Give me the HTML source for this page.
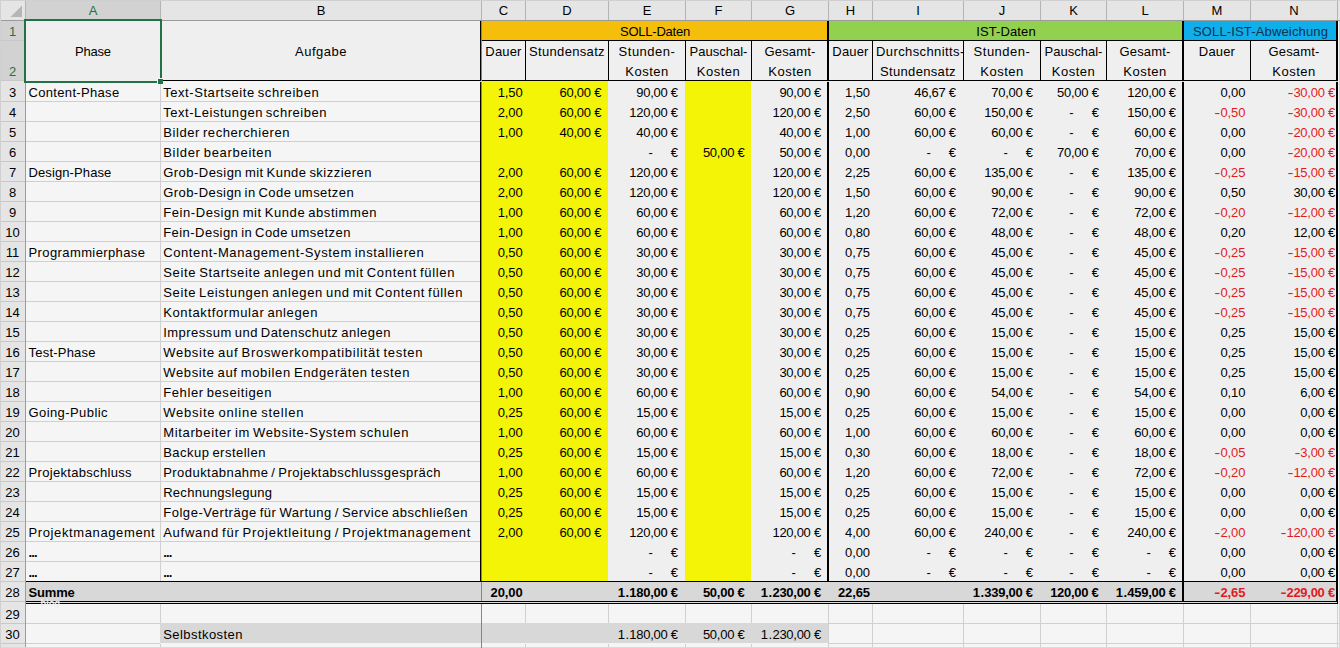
<!DOCTYPE html><html lang="de"><head><meta charset="utf-8"><title>Projektkalkulation</title><style>
html,body{margin:0;padding:0}body{width:1340px;height:648px;overflow:hidden;background:#f5f5f5;position:relative;font-family:"Liberation Sans", Arial, sans-serif;font-size:13px;color:#000;line-height:20px}
div{position:absolute;white-space:pre;box-sizing:border-box;word-spacing:-1.2px}
.t{height:20px}.r{text-align:right;letter-spacing:-0.27px;word-spacing:0}.p{letter-spacing:-0.1px}.m{display:inline-block;transform:scaleX(1.4);transform-origin:100% 50%}.c{text-align:center}.b{font-weight:bold}.red{color:#e01b1e}
.ch{top:1px;height:19px;line-height:19px;text-align:center;font-size:13px}
.rh{left:0;width:25px;text-align:center;font-size:13px}
</style></head><body>
<div style="left:0px;top:0px;width:1340px;height:21px;background:#e5e5e5;"></div>
<div style="left:0px;top:0px;width:1340px;height:1px;background:#cfcfcf;"></div>
<div style="left:0px;top:20px;width:1340px;height:1px;background:#9b9b9b;"></div>
<div style="left:0px;top:21px;width:26px;height:627px;background:#e5e5e5;"></div>
<div style="left:25px;top:21px;width:1px;height:627px;background:#9b9b9b;"></div>
<div style="left:26px;top:1px;width:135px;height:19px;background:#d2d2d2;"></div>
<div style="left:0px;top:21px;width:25px;height:60px;background:#d2d2d2;"></div>
<div style="left:26px;top:21px;width:1311px;height:60px;background:#efefef;"></div>
<div style="left:481px;top:81px;width:856px;height:500px;background:#efefef;"></div>
<div style="left:482px;top:81px;width:126px;height:500px;background:#f4f406;"></div>
<div style="left:685px;top:81px;width:66px;height:500px;background:#f4f406;"></div>
<div style="left:482px;top:21px;width:346px;height:19px;background:#f5be0b;"></div>
<div style="left:829px;top:21px;width:354px;height:19px;background:#92d050;"></div>
<div style="left:1184px;top:21px;width:153px;height:19px;background:#10aeea;"></div>
<div style="left:26px;top:582px;width:1311px;height:19px;background:#d8d8d8;"></div>
<div style="left:161px;top:624px;width:667px;height:19px;background:#d8d8d8;"></div>
<div style="left:26px;top:101px;width:455px;height:1px;background:#d0d0d0;"></div>
<div style="left:26px;top:121px;width:455px;height:1px;background:#d0d0d0;"></div>
<div style="left:26px;top:141px;width:455px;height:1px;background:#d0d0d0;"></div>
<div style="left:26px;top:161px;width:455px;height:1px;background:#d0d0d0;"></div>
<div style="left:26px;top:181px;width:455px;height:1px;background:#d0d0d0;"></div>
<div style="left:26px;top:201px;width:455px;height:1px;background:#d0d0d0;"></div>
<div style="left:26px;top:221px;width:455px;height:1px;background:#d0d0d0;"></div>
<div style="left:26px;top:241px;width:455px;height:1px;background:#d0d0d0;"></div>
<div style="left:26px;top:261px;width:455px;height:1px;background:#d0d0d0;"></div>
<div style="left:26px;top:281px;width:455px;height:1px;background:#d0d0d0;"></div>
<div style="left:26px;top:301px;width:455px;height:1px;background:#d0d0d0;"></div>
<div style="left:26px;top:321px;width:455px;height:1px;background:#d0d0d0;"></div>
<div style="left:26px;top:341px;width:455px;height:1px;background:#d0d0d0;"></div>
<div style="left:26px;top:361px;width:455px;height:1px;background:#d0d0d0;"></div>
<div style="left:26px;top:381px;width:455px;height:1px;background:#d0d0d0;"></div>
<div style="left:26px;top:401px;width:455px;height:1px;background:#d0d0d0;"></div>
<div style="left:26px;top:421px;width:455px;height:1px;background:#d0d0d0;"></div>
<div style="left:26px;top:441px;width:455px;height:1px;background:#d0d0d0;"></div>
<div style="left:26px;top:461px;width:455px;height:1px;background:#d0d0d0;"></div>
<div style="left:26px;top:481px;width:455px;height:1px;background:#d0d0d0;"></div>
<div style="left:26px;top:501px;width:455px;height:1px;background:#d0d0d0;"></div>
<div style="left:26px;top:521px;width:455px;height:1px;background:#d0d0d0;"></div>
<div style="left:26px;top:541px;width:455px;height:1px;background:#d0d0d0;"></div>
<div style="left:26px;top:561px;width:455px;height:1px;background:#d0d0d0;"></div>
<div style="left:26px;top:623px;width:1314px;height:1px;background:#d0d0d0;"></div>
<div style="left:26px;top:643px;width:1314px;height:1px;background:#d0d0d0;"></div>
<div style="left:160px;top:81px;width:1px;height:500px;background:#d0d0d0;"></div>
<div style="left:160px;top:604px;width:1px;height:44px;background:#d0d0d0;"></div>
<div style="left:481px;top:604px;width:1px;height:44px;background:#d0d0d0;"></div>
<div style="left:525px;top:604px;width:1px;height:44px;background:#d0d0d0;"></div>
<div style="left:608px;top:604px;width:1px;height:44px;background:#d0d0d0;"></div>
<div style="left:685px;top:604px;width:1px;height:44px;background:#d0d0d0;"></div>
<div style="left:751px;top:604px;width:1px;height:44px;background:#d0d0d0;"></div>
<div style="left:828px;top:604px;width:1px;height:44px;background:#d0d0d0;"></div>
<div style="left:872px;top:604px;width:1px;height:44px;background:#d0d0d0;"></div>
<div style="left:963px;top:604px;width:1px;height:44px;background:#d0d0d0;"></div>
<div style="left:1040px;top:604px;width:1px;height:44px;background:#d0d0d0;"></div>
<div style="left:1106px;top:604px;width:1px;height:44px;background:#d0d0d0;"></div>
<div style="left:1183px;top:604px;width:1px;height:44px;background:#d0d0d0;"></div>
<div style="left:1250px;top:604px;width:1px;height:44px;background:#d0d0d0;"></div>
<div style="left:1337px;top:604px;width:1px;height:44px;background:#d0d0d0;"></div>
<div style="left:160px;top:623px;width:668px;height:20px;background:#d8d8d8;"></div>
<div style="left:160px;top:643px;width:668px;height:1px;background:#f5f5f5;"></div>
<div style="left:0px;top:647px;width:1340px;height:1px;background:#dadada;"></div>
<div style="left:1339px;top:21px;width:1px;height:627px;background:#d6d6d6;"></div>
<div style="left:1px;top:40px;width:24px;height:1px;background:#c8c8c8;"></div>
<div style="left:1px;top:80px;width:24px;height:1px;background:#c8c8c8;"></div>
<div style="left:1px;top:101px;width:24px;height:1px;background:#c8c8c8;"></div>
<div style="left:1px;top:121px;width:24px;height:1px;background:#c8c8c8;"></div>
<div style="left:1px;top:141px;width:24px;height:1px;background:#c8c8c8;"></div>
<div style="left:1px;top:161px;width:24px;height:1px;background:#c8c8c8;"></div>
<div style="left:1px;top:181px;width:24px;height:1px;background:#c8c8c8;"></div>
<div style="left:1px;top:201px;width:24px;height:1px;background:#c8c8c8;"></div>
<div style="left:1px;top:221px;width:24px;height:1px;background:#c8c8c8;"></div>
<div style="left:1px;top:241px;width:24px;height:1px;background:#c8c8c8;"></div>
<div style="left:1px;top:261px;width:24px;height:1px;background:#c8c8c8;"></div>
<div style="left:1px;top:281px;width:24px;height:1px;background:#c8c8c8;"></div>
<div style="left:1px;top:301px;width:24px;height:1px;background:#c8c8c8;"></div>
<div style="left:1px;top:321px;width:24px;height:1px;background:#c8c8c8;"></div>
<div style="left:1px;top:341px;width:24px;height:1px;background:#c8c8c8;"></div>
<div style="left:1px;top:361px;width:24px;height:1px;background:#c8c8c8;"></div>
<div style="left:1px;top:381px;width:24px;height:1px;background:#c8c8c8;"></div>
<div style="left:1px;top:401px;width:24px;height:1px;background:#c8c8c8;"></div>
<div style="left:1px;top:421px;width:24px;height:1px;background:#c8c8c8;"></div>
<div style="left:1px;top:441px;width:24px;height:1px;background:#c8c8c8;"></div>
<div style="left:1px;top:461px;width:24px;height:1px;background:#c8c8c8;"></div>
<div style="left:1px;top:481px;width:24px;height:1px;background:#c8c8c8;"></div>
<div style="left:1px;top:501px;width:24px;height:1px;background:#c8c8c8;"></div>
<div style="left:1px;top:521px;width:24px;height:1px;background:#c8c8c8;"></div>
<div style="left:1px;top:541px;width:24px;height:1px;background:#c8c8c8;"></div>
<div style="left:1px;top:561px;width:24px;height:1px;background:#c8c8c8;"></div>
<div style="left:1px;top:581px;width:24px;height:1px;background:#c8c8c8;"></div>
<div style="left:1px;top:601px;width:24px;height:1px;background:#c8c8c8;"></div>
<div style="left:1px;top:623px;width:24px;height:1px;background:#c8c8c8;"></div>
<div style="left:1px;top:643px;width:24px;height:1px;background:#c8c8c8;"></div>
<div style="left:0px;top:0px;width:1px;height:648px;background:#d0d0d0;"></div>
<div style="left:25px;top:1px;width:1px;height:19px;background:#b4b4b4;"></div>
<div style="left:160px;top:1px;width:1px;height:19px;background:#b4b4b4;"></div>
<div style="left:481px;top:1px;width:1px;height:19px;background:#b4b4b4;"></div>
<div style="left:525px;top:1px;width:1px;height:19px;background:#b4b4b4;"></div>
<div style="left:608px;top:1px;width:1px;height:19px;background:#b4b4b4;"></div>
<div style="left:685px;top:1px;width:1px;height:19px;background:#b4b4b4;"></div>
<div style="left:751px;top:1px;width:1px;height:19px;background:#b4b4b4;"></div>
<div style="left:828px;top:1px;width:1px;height:19px;background:#b4b4b4;"></div>
<div style="left:872px;top:1px;width:1px;height:19px;background:#b4b4b4;"></div>
<div style="left:963px;top:1px;width:1px;height:19px;background:#b4b4b4;"></div>
<div style="left:1040px;top:1px;width:1px;height:19px;background:#b4b4b4;"></div>
<div style="left:1106px;top:1px;width:1px;height:19px;background:#b4b4b4;"></div>
<div style="left:1183px;top:1px;width:1px;height:19px;background:#b4b4b4;"></div>
<div style="left:1250px;top:1px;width:1px;height:19px;background:#b4b4b4;"></div>
<div style="left:1337px;top:1px;width:1px;height:19px;background:#b4b4b4;"></div>
<div style="left:162px;top:80px;width:1175px;height:1px;background:#000;"></div>
<div style="left:482px;top:40px;width:855px;height:1px;background:#000;"></div>
<div style="left:525px;top:41px;width:1px;height:40px;background:#000;"></div>
<div style="left:608px;top:41px;width:1px;height:40px;background:#000;"></div>
<div style="left:685px;top:41px;width:1px;height:40px;background:#000;"></div>
<div style="left:751px;top:41px;width:1px;height:40px;background:#000;"></div>
<div style="left:872px;top:41px;width:1px;height:40px;background:#000;"></div>
<div style="left:963px;top:41px;width:1px;height:40px;background:#000;"></div>
<div style="left:1040px;top:41px;width:1px;height:40px;background:#000;"></div>
<div style="left:1106px;top:41px;width:1px;height:40px;background:#000;"></div>
<div style="left:1250px;top:41px;width:1px;height:40px;background:#000;"></div>
<div style="left:480px;top:21px;width:1px;height:561px;background:#000;"></div>
<div style="left:481px;top:21px;width:1px;height:627px;background:#858585;"></div>
<div style="left:827px;top:21px;width:2px;height:561px;background:#000;"></div>
<div style="left:1182px;top:21px;width:2px;height:583px;background:#000;"></div>
<div style="left:1336px;top:21px;width:2px;height:583px;background:#000;"></div>
<div style="left:26px;top:581px;width:1311px;height:1px;background:#000;"></div>
<div style="left:26px;top:601px;width:1311px;height:1px;background:#000;"></div>
<div style="left:26px;top:603px;width:1311px;height:1px;background:#000;"></div>
<div style="left:26px;top:602px;width:1311px;height:1px;background:#dedede;"></div>
<div style="left:480px;top:81px;width:2px;height:1px;background:#d6d6d6;"></div>
<div style="left:827px;top:81px;width:2px;height:1px;background:#d6d6d6;"></div>
<div style="left:1182px;top:81px;width:2px;height:1px;background:#d6d6d6;"></div>
<div style="left:1336px;top:81px;width:2px;height:1px;background:#d6d6d6;"></div>
<div style="left:24px;top:19px;width:138px;height:2px;background:#217346;"></div>
<div style="left:24px;top:81px;width:133px;height:2px;background:#217346;"></div>
<div style="left:24px;top:19px;width:2px;height:64px;background:#217346;"></div>
<div style="left:160px;top:19px;width:2px;height:59px;background:#217346;"></div>
<div style="left:158px;top:79px;width:5px;height:5px;background:#217346;"></div>
<div style="left:157px;top:78px;width:7px;height:1px;background:#f5f5f5;"></div>
<div style="left:157px;top:78px;width:1px;height:6px;background:#f5f5f5;"></div>
<svg style="position:absolute;left:0;top:0" width="25" height="20"><polygon points="22,5.5 22,17 10.5,17" fill="#b6b6b6"/></svg>
<div class="ch" style="left:26px;width:134px;color:#217346;">A</div>
<div class="ch" style="left:161px;width:320px;">B</div>
<div class="ch" style="left:482px;width:43px;">C</div>
<div class="ch" style="left:526px;width:82px;">D</div>
<div class="ch" style="left:609px;width:76px;">E</div>
<div class="ch" style="left:686px;width:65px;">F</div>
<div class="ch" style="left:752px;width:76px;">G</div>
<div class="ch" style="left:829px;width:43px;">H</div>
<div class="ch" style="left:873px;width:90px;">I</div>
<div class="ch" style="left:964px;width:76px;">J</div>
<div class="ch" style="left:1041px;width:65px;">K</div>
<div class="ch" style="left:1107px;width:76px;">L</div>
<div class="ch" style="left:1184px;width:66px;">M</div>
<div class="ch" style="left:1251px;width:86px;">N</div>
<div class="rh t" style="top:22px;color:#217346;">1</div>
<div class="rh t" style="top:62px;color:#217346;">2</div>
<div class="rh t" style="top:83px;">3</div>
<div class="rh t" style="top:103px;">4</div>
<div class="rh t" style="top:123px;">5</div>
<div class="rh t" style="top:143px;">6</div>
<div class="rh t" style="top:163px;">7</div>
<div class="rh t" style="top:183px;">8</div>
<div class="rh t" style="top:203px;">9</div>
<div class="rh t" style="top:223px;">10</div>
<div class="rh t" style="top:243px;">11</div>
<div class="rh t" style="top:263px;">12</div>
<div class="rh t" style="top:283px;">13</div>
<div class="rh t" style="top:303px;">14</div>
<div class="rh t" style="top:323px;">15</div>
<div class="rh t" style="top:343px;">16</div>
<div class="rh t" style="top:363px;">17</div>
<div class="rh t" style="top:383px;">18</div>
<div class="rh t" style="top:403px;">19</div>
<div class="rh t" style="top:423px;">20</div>
<div class="rh t" style="top:443px;">21</div>
<div class="rh t" style="top:463px;">22</div>
<div class="rh t" style="top:483px;">23</div>
<div class="rh t" style="top:503px;">24</div>
<div class="rh t" style="top:523px;">25</div>
<div class="rh t" style="top:543px;">26</div>
<div class="rh t" style="top:563px;">27</div>
<div class="rh t" style="top:583px;">28</div>
<div class="rh t" style="top:605px;">29</div>
<div class="rh t" style="top:625px;">30</div>
<div class="t c" style="left:26px;top:42px;width:134px;letter-spacing:-0.219px;">Phase</div>
<div class="t c" style="left:161px;top:42px;width:320px;letter-spacing:0.51px;">Aufgabe</div>
<div class="t c" style="left:482px;top:22px;width:346px;letter-spacing:-0.23px;">SOLL-Daten</div>
<div class="t c" style="left:829px;top:22px;width:354px;letter-spacing:0.121px;">IST-Daten</div>
<div class="t c" style="left:1184px;top:22px;width:153px;letter-spacing:0.154px;color:#0c3350;">SOLL-IST-Abweichung</div>
<div class="t c" style="left:482px;top:42px;width:43px;letter-spacing:0.17px;">Dauer</div>
<div class="t c" style="left:829px;top:42px;width:43px;letter-spacing:0.17px;">Dauer</div>
<div class="t c" style="left:1184px;top:42px;width:66px;letter-spacing:0.17px;">Dauer</div>
<div class="t c" style="left:526px;top:42px;width:82px;letter-spacing:0.322px;">Stundensatz</div>
<div class="t c" style="left:609px;top:42px;width:76px;letter-spacing:0.505px;">Stunden-</div>
<div class="t c" style="left:609px;top:62px;width:76px;letter-spacing:0.463px;">Kosten</div>
<div class="t c" style="left:964px;top:42px;width:76px;letter-spacing:0.505px;">Stunden-</div>
<div class="t c" style="left:964px;top:62px;width:76px;letter-spacing:0.463px;">Kosten</div>
<div class="t c" style="left:686px;top:42px;width:65px;letter-spacing:-0.002px;">Pauschal-</div>
<div class="t c" style="left:686px;top:62px;width:65px;letter-spacing:0.463px;">Kosten</div>
<div class="t c" style="left:1041px;top:42px;width:65px;letter-spacing:-0.002px;">Pauschal-</div>
<div class="t c" style="left:1041px;top:62px;width:65px;letter-spacing:0.463px;">Kosten</div>
<div class="t c" style="left:752px;top:42px;width:76px;letter-spacing:0.143px;">Gesamt-</div>
<div class="t c" style="left:752px;top:62px;width:76px;letter-spacing:0.463px;">Kosten</div>
<div class="t c" style="left:1107px;top:42px;width:76px;letter-spacing:0.143px;">Gesamt-</div>
<div class="t c" style="left:1107px;top:62px;width:76px;letter-spacing:0.463px;">Kosten</div>
<div class="t c" style="left:1251px;top:42px;width:86px;letter-spacing:0.143px;">Gesamt-</div>
<div class="t c" style="left:1251px;top:62px;width:86px;letter-spacing:0.463px;">Kosten</div>
<div class="t " style="left:873px;top:42px;width:95px;letter-spacing:0.402px;left:876px;">Durchschnitts-</div>
<div class="t c" style="left:873px;top:62px;width:90px;letter-spacing:0.322px;">Stundensatz</div>
<div class="t " style="left:28.5px;top:83px;width:140px;letter-spacing:0.33px;">Content-Phase</div>
<div class="t " style="left:28.5px;top:163px;width:140px;letter-spacing:0.104px;">Design-Phase</div>
<div class="t " style="left:28.5px;top:243px;width:140px;letter-spacing:0.397px;">Programmierphase</div>
<div class="t " style="left:28.5px;top:343px;width:140px;letter-spacing:0.217px;">Test-Phase</div>
<div class="t " style="left:28.5px;top:403px;width:140px;letter-spacing:0.415px;">Going-Public</div>
<div class="t " style="left:28.5px;top:463px;width:140px;letter-spacing:0.315px;">Projektabschluss</div>
<div class="t " style="left:28.5px;top:523px;width:140px;letter-spacing:0.616px;">Projektmanagement</div>
<div class="t b" style="left:28.5px;top:543px;width:140px;letter-spacing:-0.822px;">...</div>
<div class="t b" style="left:28.5px;top:563px;width:140px;letter-spacing:-0.822px;">...</div>
<div class="t " style="left:163.2px;top:83px;width:320px;letter-spacing:0.568px;">Text-Startseite schreiben</div>
<div class="t " style="left:163.2px;top:103px;width:320px;letter-spacing:0.529px;">Text-Leistungen schreiben</div>
<div class="t " style="left:163.2px;top:123px;width:320px;letter-spacing:0.585px;">Bilder recherchieren</div>
<div class="t " style="left:163.2px;top:143px;width:320px;letter-spacing:0.697px;">Bilder bearbeiten</div>
<div class="t " style="left:163.2px;top:163px;width:320px;letter-spacing:0.471px;">Grob-Design mit Kunde skizzieren</div>
<div class="t " style="left:163.2px;top:183px;width:320px;letter-spacing:0.444px;">Grob-Design in Code umsetzen</div>
<div class="t " style="left:163.2px;top:203px;width:320px;letter-spacing:0.581px;">Fein-Design mit Kunde abstimmen</div>
<div class="t " style="left:163.2px;top:223px;width:320px;letter-spacing:0.458px;">Fein-Design in Code umsetzen</div>
<div class="t " style="left:163.2px;top:243px;width:320px;letter-spacing:0.609px;">Content-Management-System installieren</div>
<div class="t " style="left:163.2px;top:263px;width:320px;letter-spacing:0.659px;">Seite Startseite anlegen und mit Content füllen</div>
<div class="t " style="left:163.2px;top:283px;width:320px;letter-spacing:0.644px;">Seite Leistungen anlegen und mit Content füllen</div>
<div class="t " style="left:163.2px;top:303px;width:320px;letter-spacing:0.627px;">Kontaktformular anlegen</div>
<div class="t " style="left:163.2px;top:323px;width:320px;letter-spacing:0.484px;">Impressum und Datenschutz anlegen</div>
<div class="t " style="left:163.2px;top:343px;width:320px;letter-spacing:0.724px;">Website auf Broswerkompatibilität testen</div>
<div class="t " style="left:163.2px;top:363px;width:320px;letter-spacing:0.657px;">Website auf mobilen Endgeräten testen</div>
<div class="t " style="left:163.2px;top:383px;width:320px;letter-spacing:0.607px;">Fehler beseitigen</div>
<div class="t " style="left:163.2px;top:403px;width:320px;letter-spacing:0.782px;">Website online stellen</div>
<div class="t " style="left:163.2px;top:423px;width:320px;letter-spacing:0.658px;">Mitarbeiter im Website-System schulen</div>
<div class="t " style="left:163.2px;top:443px;width:320px;letter-spacing:0.489px;">Backup erstellen</div>
<div class="t " style="left:163.2px;top:463px;width:320px;letter-spacing:0.451px;">Produktabnahme / Projektabschlussgespräch</div>
<div class="t " style="left:163.2px;top:483px;width:320px;letter-spacing:0.281px;">Rechnungslegung</div>
<div class="t " style="left:163.2px;top:503px;width:320px;letter-spacing:0.539px;">Folge-Verträge für Wartung / Service abschließen</div>
<div class="t " style="left:163.2px;top:523px;width:320px;letter-spacing:0.736px;">Aufwand für Projektleitung / Projektmanagement</div>
<div class="t b" style="left:163.2px;top:543px;width:320px;letter-spacing:-0.822px;">...</div>
<div class="t b" style="left:163.2px;top:563px;width:320px;letter-spacing:-0.822px;">...</div>
<div class="t b" style="left:28.5px;top:583px;width:100px;letter-spacing:-0.167px;">Summe</div>
<div class="t " style="left:163.2px;top:625px;width:200px;letter-spacing:0.442px;">Selbstkosten</div>
<div style="left:40.5px;top:596.7px;font-size:9px;line-height:12px;font-weight:bold;letter-spacing:0.2px;color:#f0f0f0">blog</div>
<div class="t r p" style="left:402.6px;top:83px;width:120px">1,50</div>
<div class="t r" style="left:481.1px;top:83px;width:120px">60,00 €</div>
<div class="t r" style="left:557.8px;top:83px;width:120px">90,00 €</div>
<div class="t r" style="left:700.9px;top:83px;width:120px">90,00 €</div>
<div class="t r p" style="left:750px;top:83px;width:120px">1,50</div>
<div class="t r" style="left:835.8px;top:83px;width:120px">46,67 €</div>
<div class="t r" style="left:912.8px;top:83px;width:120px">70,00 €</div>
<div class="t r" style="left:978.6px;top:83px;width:120px">50,00 €</div>
<div class="t r" style="left:1055.8px;top:83px;width:120px">120,00 €</div>
<div class="t r p" style="left:1125.3px;top:83px;width:120px">0,00</div>
<div class="t r red" style="left:1214.9px;top:83px;width:120px"><span class="m">-</span>30,00 €</div>
<div class="t r p" style="left:402.6px;top:103px;width:120px">2,00</div>
<div class="t r" style="left:481.1px;top:103px;width:120px">60,00 €</div>
<div class="t r" style="left:557.8px;top:103px;width:120px">120,00 €</div>
<div class="t r" style="left:700.9px;top:103px;width:120px">120,00 €</div>
<div class="t r p" style="left:750px;top:103px;width:120px">2,50</div>
<div class="t r" style="left:835.8px;top:103px;width:120px">60,00 €</div>
<div class="t r" style="left:912.8px;top:103px;width:120px">150,00 €</div>
<div class="t r" style="left:978.6px;top:103px;width:120px"><span style="margin-right:18.3px">-</span>€</div>
<div class="t r" style="left:1055.8px;top:103px;width:120px">150,00 €</div>
<div class="t r red p" style="left:1125.3px;top:103px;width:120px"><span class="m">-</span>0,50</div>
<div class="t r red" style="left:1214.9px;top:103px;width:120px"><span class="m">-</span>30,00 €</div>
<div class="t r p" style="left:402.6px;top:123px;width:120px">1,00</div>
<div class="t r" style="left:481.1px;top:123px;width:120px">40,00 €</div>
<div class="t r" style="left:557.8px;top:123px;width:120px">40,00 €</div>
<div class="t r" style="left:700.9px;top:123px;width:120px">40,00 €</div>
<div class="t r p" style="left:750px;top:123px;width:120px">1,00</div>
<div class="t r" style="left:835.8px;top:123px;width:120px">60,00 €</div>
<div class="t r" style="left:912.8px;top:123px;width:120px">60,00 €</div>
<div class="t r" style="left:978.6px;top:123px;width:120px"><span style="margin-right:18.3px">-</span>€</div>
<div class="t r" style="left:1055.8px;top:123px;width:120px">60,00 €</div>
<div class="t r p" style="left:1125.3px;top:123px;width:120px">0,00</div>
<div class="t r red" style="left:1214.9px;top:123px;width:120px"><span class="m">-</span>20,00 €</div>
<div class="t r" style="left:557.8px;top:143px;width:120px"><span style="margin-right:18.3px">-</span>€</div>
<div class="t r" style="left:624.4px;top:143px;width:120px">50,00 €</div>
<div class="t r" style="left:700.9px;top:143px;width:120px">50,00 €</div>
<div class="t r p" style="left:750px;top:143px;width:120px">0,00</div>
<div class="t r" style="left:835.8px;top:143px;width:120px"><span style="margin-right:18.3px">-</span>€</div>
<div class="t r" style="left:912.8px;top:143px;width:120px"><span style="margin-right:18.3px">-</span>€</div>
<div class="t r" style="left:978.6px;top:143px;width:120px">70,00 €</div>
<div class="t r" style="left:1055.8px;top:143px;width:120px">70,00 €</div>
<div class="t r p" style="left:1125.3px;top:143px;width:120px">0,00</div>
<div class="t r red" style="left:1214.9px;top:143px;width:120px"><span class="m">-</span>20,00 €</div>
<div class="t r p" style="left:402.6px;top:163px;width:120px">2,00</div>
<div class="t r" style="left:481.1px;top:163px;width:120px">60,00 €</div>
<div class="t r" style="left:557.8px;top:163px;width:120px">120,00 €</div>
<div class="t r" style="left:700.9px;top:163px;width:120px">120,00 €</div>
<div class="t r p" style="left:750px;top:163px;width:120px">2,25</div>
<div class="t r" style="left:835.8px;top:163px;width:120px">60,00 €</div>
<div class="t r" style="left:912.8px;top:163px;width:120px">135,00 €</div>
<div class="t r" style="left:978.6px;top:163px;width:120px"><span style="margin-right:18.3px">-</span>€</div>
<div class="t r" style="left:1055.8px;top:163px;width:120px">135,00 €</div>
<div class="t r red p" style="left:1125.3px;top:163px;width:120px"><span class="m">-</span>0,25</div>
<div class="t r red" style="left:1214.9px;top:163px;width:120px"><span class="m">-</span>15,00 €</div>
<div class="t r p" style="left:402.6px;top:183px;width:120px">2,00</div>
<div class="t r" style="left:481.1px;top:183px;width:120px">60,00 €</div>
<div class="t r" style="left:557.8px;top:183px;width:120px">120,00 €</div>
<div class="t r" style="left:700.9px;top:183px;width:120px">120,00 €</div>
<div class="t r p" style="left:750px;top:183px;width:120px">1,50</div>
<div class="t r" style="left:835.8px;top:183px;width:120px">60,00 €</div>
<div class="t r" style="left:912.8px;top:183px;width:120px">90,00 €</div>
<div class="t r" style="left:978.6px;top:183px;width:120px"><span style="margin-right:18.3px">-</span>€</div>
<div class="t r" style="left:1055.8px;top:183px;width:120px">90,00 €</div>
<div class="t r p" style="left:1125.3px;top:183px;width:120px">0,50</div>
<div class="t r" style="left:1214.9px;top:183px;width:120px">30,00 €</div>
<div class="t r p" style="left:402.6px;top:203px;width:120px">1,00</div>
<div class="t r" style="left:481.1px;top:203px;width:120px">60,00 €</div>
<div class="t r" style="left:557.8px;top:203px;width:120px">60,00 €</div>
<div class="t r" style="left:700.9px;top:203px;width:120px">60,00 €</div>
<div class="t r p" style="left:750px;top:203px;width:120px">1,20</div>
<div class="t r" style="left:835.8px;top:203px;width:120px">60,00 €</div>
<div class="t r" style="left:912.8px;top:203px;width:120px">72,00 €</div>
<div class="t r" style="left:978.6px;top:203px;width:120px"><span style="margin-right:18.3px">-</span>€</div>
<div class="t r" style="left:1055.8px;top:203px;width:120px">72,00 €</div>
<div class="t r red p" style="left:1125.3px;top:203px;width:120px"><span class="m">-</span>0,20</div>
<div class="t r red" style="left:1214.9px;top:203px;width:120px"><span class="m">-</span>12,00 €</div>
<div class="t r p" style="left:402.6px;top:223px;width:120px">1,00</div>
<div class="t r" style="left:481.1px;top:223px;width:120px">60,00 €</div>
<div class="t r" style="left:557.8px;top:223px;width:120px">60,00 €</div>
<div class="t r" style="left:700.9px;top:223px;width:120px">60,00 €</div>
<div class="t r p" style="left:750px;top:223px;width:120px">0,80</div>
<div class="t r" style="left:835.8px;top:223px;width:120px">60,00 €</div>
<div class="t r" style="left:912.8px;top:223px;width:120px">48,00 €</div>
<div class="t r" style="left:978.6px;top:223px;width:120px"><span style="margin-right:18.3px">-</span>€</div>
<div class="t r" style="left:1055.8px;top:223px;width:120px">48,00 €</div>
<div class="t r p" style="left:1125.3px;top:223px;width:120px">0,20</div>
<div class="t r" style="left:1214.9px;top:223px;width:120px">12,00 €</div>
<div class="t r p" style="left:402.6px;top:243px;width:120px">0,50</div>
<div class="t r" style="left:481.1px;top:243px;width:120px">60,00 €</div>
<div class="t r" style="left:557.8px;top:243px;width:120px">30,00 €</div>
<div class="t r" style="left:700.9px;top:243px;width:120px">30,00 €</div>
<div class="t r p" style="left:750px;top:243px;width:120px">0,75</div>
<div class="t r" style="left:835.8px;top:243px;width:120px">60,00 €</div>
<div class="t r" style="left:912.8px;top:243px;width:120px">45,00 €</div>
<div class="t r" style="left:978.6px;top:243px;width:120px"><span style="margin-right:18.3px">-</span>€</div>
<div class="t r" style="left:1055.8px;top:243px;width:120px">45,00 €</div>
<div class="t r red p" style="left:1125.3px;top:243px;width:120px"><span class="m">-</span>0,25</div>
<div class="t r red" style="left:1214.9px;top:243px;width:120px"><span class="m">-</span>15,00 €</div>
<div class="t r p" style="left:402.6px;top:263px;width:120px">0,50</div>
<div class="t r" style="left:481.1px;top:263px;width:120px">60,00 €</div>
<div class="t r" style="left:557.8px;top:263px;width:120px">30,00 €</div>
<div class="t r" style="left:700.9px;top:263px;width:120px">30,00 €</div>
<div class="t r p" style="left:750px;top:263px;width:120px">0,75</div>
<div class="t r" style="left:835.8px;top:263px;width:120px">60,00 €</div>
<div class="t r" style="left:912.8px;top:263px;width:120px">45,00 €</div>
<div class="t r" style="left:978.6px;top:263px;width:120px"><span style="margin-right:18.3px">-</span>€</div>
<div class="t r" style="left:1055.8px;top:263px;width:120px">45,00 €</div>
<div class="t r red p" style="left:1125.3px;top:263px;width:120px"><span class="m">-</span>0,25</div>
<div class="t r red" style="left:1214.9px;top:263px;width:120px"><span class="m">-</span>15,00 €</div>
<div class="t r p" style="left:402.6px;top:283px;width:120px">0,50</div>
<div class="t r" style="left:481.1px;top:283px;width:120px">60,00 €</div>
<div class="t r" style="left:557.8px;top:283px;width:120px">30,00 €</div>
<div class="t r" style="left:700.9px;top:283px;width:120px">30,00 €</div>
<div class="t r p" style="left:750px;top:283px;width:120px">0,75</div>
<div class="t r" style="left:835.8px;top:283px;width:120px">60,00 €</div>
<div class="t r" style="left:912.8px;top:283px;width:120px">45,00 €</div>
<div class="t r" style="left:978.6px;top:283px;width:120px"><span style="margin-right:18.3px">-</span>€</div>
<div class="t r" style="left:1055.8px;top:283px;width:120px">45,00 €</div>
<div class="t r red p" style="left:1125.3px;top:283px;width:120px"><span class="m">-</span>0,25</div>
<div class="t r red" style="left:1214.9px;top:283px;width:120px"><span class="m">-</span>15,00 €</div>
<div class="t r p" style="left:402.6px;top:303px;width:120px">0,50</div>
<div class="t r" style="left:481.1px;top:303px;width:120px">60,00 €</div>
<div class="t r" style="left:557.8px;top:303px;width:120px">30,00 €</div>
<div class="t r" style="left:700.9px;top:303px;width:120px">30,00 €</div>
<div class="t r p" style="left:750px;top:303px;width:120px">0,75</div>
<div class="t r" style="left:835.8px;top:303px;width:120px">60,00 €</div>
<div class="t r" style="left:912.8px;top:303px;width:120px">45,00 €</div>
<div class="t r" style="left:978.6px;top:303px;width:120px"><span style="margin-right:18.3px">-</span>€</div>
<div class="t r" style="left:1055.8px;top:303px;width:120px">45,00 €</div>
<div class="t r red p" style="left:1125.3px;top:303px;width:120px"><span class="m">-</span>0,25</div>
<div class="t r red" style="left:1214.9px;top:303px;width:120px"><span class="m">-</span>15,00 €</div>
<div class="t r p" style="left:402.6px;top:323px;width:120px">0,50</div>
<div class="t r" style="left:481.1px;top:323px;width:120px">60,00 €</div>
<div class="t r" style="left:557.8px;top:323px;width:120px">30,00 €</div>
<div class="t r" style="left:700.9px;top:323px;width:120px">30,00 €</div>
<div class="t r p" style="left:750px;top:323px;width:120px">0,25</div>
<div class="t r" style="left:835.8px;top:323px;width:120px">60,00 €</div>
<div class="t r" style="left:912.8px;top:323px;width:120px">15,00 €</div>
<div class="t r" style="left:978.6px;top:323px;width:120px"><span style="margin-right:18.3px">-</span>€</div>
<div class="t r" style="left:1055.8px;top:323px;width:120px">15,00 €</div>
<div class="t r p" style="left:1125.3px;top:323px;width:120px">0,25</div>
<div class="t r" style="left:1214.9px;top:323px;width:120px">15,00 €</div>
<div class="t r p" style="left:402.6px;top:343px;width:120px">0,50</div>
<div class="t r" style="left:481.1px;top:343px;width:120px">60,00 €</div>
<div class="t r" style="left:557.8px;top:343px;width:120px">30,00 €</div>
<div class="t r" style="left:700.9px;top:343px;width:120px">30,00 €</div>
<div class="t r p" style="left:750px;top:343px;width:120px">0,25</div>
<div class="t r" style="left:835.8px;top:343px;width:120px">60,00 €</div>
<div class="t r" style="left:912.8px;top:343px;width:120px">15,00 €</div>
<div class="t r" style="left:978.6px;top:343px;width:120px"><span style="margin-right:18.3px">-</span>€</div>
<div class="t r" style="left:1055.8px;top:343px;width:120px">15,00 €</div>
<div class="t r p" style="left:1125.3px;top:343px;width:120px">0,25</div>
<div class="t r" style="left:1214.9px;top:343px;width:120px">15,00 €</div>
<div class="t r p" style="left:402.6px;top:363px;width:120px">0,50</div>
<div class="t r" style="left:481.1px;top:363px;width:120px">60,00 €</div>
<div class="t r" style="left:557.8px;top:363px;width:120px">30,00 €</div>
<div class="t r" style="left:700.9px;top:363px;width:120px">30,00 €</div>
<div class="t r p" style="left:750px;top:363px;width:120px">0,25</div>
<div class="t r" style="left:835.8px;top:363px;width:120px">60,00 €</div>
<div class="t r" style="left:912.8px;top:363px;width:120px">15,00 €</div>
<div class="t r" style="left:978.6px;top:363px;width:120px"><span style="margin-right:18.3px">-</span>€</div>
<div class="t r" style="left:1055.8px;top:363px;width:120px">15,00 €</div>
<div class="t r p" style="left:1125.3px;top:363px;width:120px">0,25</div>
<div class="t r" style="left:1214.9px;top:363px;width:120px">15,00 €</div>
<div class="t r p" style="left:402.6px;top:383px;width:120px">1,00</div>
<div class="t r" style="left:481.1px;top:383px;width:120px">60,00 €</div>
<div class="t r" style="left:557.8px;top:383px;width:120px">60,00 €</div>
<div class="t r" style="left:700.9px;top:383px;width:120px">60,00 €</div>
<div class="t r p" style="left:750px;top:383px;width:120px">0,90</div>
<div class="t r" style="left:835.8px;top:383px;width:120px">60,00 €</div>
<div class="t r" style="left:912.8px;top:383px;width:120px">54,00 €</div>
<div class="t r" style="left:978.6px;top:383px;width:120px"><span style="margin-right:18.3px">-</span>€</div>
<div class="t r" style="left:1055.8px;top:383px;width:120px">54,00 €</div>
<div class="t r p" style="left:1125.3px;top:383px;width:120px">0,10</div>
<div class="t r" style="left:1214.9px;top:383px;width:120px">6,00 €</div>
<div class="t r p" style="left:402.6px;top:403px;width:120px">0,25</div>
<div class="t r" style="left:481.1px;top:403px;width:120px">60,00 €</div>
<div class="t r" style="left:557.8px;top:403px;width:120px">15,00 €</div>
<div class="t r" style="left:700.9px;top:403px;width:120px">15,00 €</div>
<div class="t r p" style="left:750px;top:403px;width:120px">0,25</div>
<div class="t r" style="left:835.8px;top:403px;width:120px">60,00 €</div>
<div class="t r" style="left:912.8px;top:403px;width:120px">15,00 €</div>
<div class="t r" style="left:978.6px;top:403px;width:120px"><span style="margin-right:18.3px">-</span>€</div>
<div class="t r" style="left:1055.8px;top:403px;width:120px">15,00 €</div>
<div class="t r p" style="left:1125.3px;top:403px;width:120px">0,00</div>
<div class="t r" style="left:1214.9px;top:403px;width:120px">0,00 €</div>
<div class="t r p" style="left:402.6px;top:423px;width:120px">1,00</div>
<div class="t r" style="left:481.1px;top:423px;width:120px">60,00 €</div>
<div class="t r" style="left:557.8px;top:423px;width:120px">60,00 €</div>
<div class="t r" style="left:700.9px;top:423px;width:120px">60,00 €</div>
<div class="t r p" style="left:750px;top:423px;width:120px">1,00</div>
<div class="t r" style="left:835.8px;top:423px;width:120px">60,00 €</div>
<div class="t r" style="left:912.8px;top:423px;width:120px">60,00 €</div>
<div class="t r" style="left:978.6px;top:423px;width:120px"><span style="margin-right:18.3px">-</span>€</div>
<div class="t r" style="left:1055.8px;top:423px;width:120px">60,00 €</div>
<div class="t r p" style="left:1125.3px;top:423px;width:120px">0,00</div>
<div class="t r" style="left:1214.9px;top:423px;width:120px">0,00 €</div>
<div class="t r p" style="left:402.6px;top:443px;width:120px">0,25</div>
<div class="t r" style="left:481.1px;top:443px;width:120px">60,00 €</div>
<div class="t r" style="left:557.8px;top:443px;width:120px">15,00 €</div>
<div class="t r" style="left:700.9px;top:443px;width:120px">15,00 €</div>
<div class="t r p" style="left:750px;top:443px;width:120px">0,30</div>
<div class="t r" style="left:835.8px;top:443px;width:120px">60,00 €</div>
<div class="t r" style="left:912.8px;top:443px;width:120px">18,00 €</div>
<div class="t r" style="left:978.6px;top:443px;width:120px"><span style="margin-right:18.3px">-</span>€</div>
<div class="t r" style="left:1055.8px;top:443px;width:120px">18,00 €</div>
<div class="t r red p" style="left:1125.3px;top:443px;width:120px"><span class="m">-</span>0,05</div>
<div class="t r red" style="left:1214.9px;top:443px;width:120px"><span class="m">-</span>3,00 €</div>
<div class="t r p" style="left:402.6px;top:463px;width:120px">1,00</div>
<div class="t r" style="left:481.1px;top:463px;width:120px">60,00 €</div>
<div class="t r" style="left:557.8px;top:463px;width:120px">60,00 €</div>
<div class="t r" style="left:700.9px;top:463px;width:120px">60,00 €</div>
<div class="t r p" style="left:750px;top:463px;width:120px">1,20</div>
<div class="t r" style="left:835.8px;top:463px;width:120px">60,00 €</div>
<div class="t r" style="left:912.8px;top:463px;width:120px">72,00 €</div>
<div class="t r" style="left:978.6px;top:463px;width:120px"><span style="margin-right:18.3px">-</span>€</div>
<div class="t r" style="left:1055.8px;top:463px;width:120px">72,00 €</div>
<div class="t r red p" style="left:1125.3px;top:463px;width:120px"><span class="m">-</span>0,20</div>
<div class="t r red" style="left:1214.9px;top:463px;width:120px"><span class="m">-</span>12,00 €</div>
<div class="t r p" style="left:402.6px;top:483px;width:120px">0,25</div>
<div class="t r" style="left:481.1px;top:483px;width:120px">60,00 €</div>
<div class="t r" style="left:557.8px;top:483px;width:120px">15,00 €</div>
<div class="t r" style="left:700.9px;top:483px;width:120px">15,00 €</div>
<div class="t r p" style="left:750px;top:483px;width:120px">0,25</div>
<div class="t r" style="left:835.8px;top:483px;width:120px">60,00 €</div>
<div class="t r" style="left:912.8px;top:483px;width:120px">15,00 €</div>
<div class="t r" style="left:978.6px;top:483px;width:120px"><span style="margin-right:18.3px">-</span>€</div>
<div class="t r" style="left:1055.8px;top:483px;width:120px">15,00 €</div>
<div class="t r p" style="left:1125.3px;top:483px;width:120px">0,00</div>
<div class="t r" style="left:1214.9px;top:483px;width:120px">0,00 €</div>
<div class="t r p" style="left:402.6px;top:503px;width:120px">0,25</div>
<div class="t r" style="left:481.1px;top:503px;width:120px">60,00 €</div>
<div class="t r" style="left:557.8px;top:503px;width:120px">15,00 €</div>
<div class="t r" style="left:700.9px;top:503px;width:120px">15,00 €</div>
<div class="t r p" style="left:750px;top:503px;width:120px">0,25</div>
<div class="t r" style="left:835.8px;top:503px;width:120px">60,00 €</div>
<div class="t r" style="left:912.8px;top:503px;width:120px">15,00 €</div>
<div class="t r" style="left:978.6px;top:503px;width:120px"><span style="margin-right:18.3px">-</span>€</div>
<div class="t r" style="left:1055.8px;top:503px;width:120px">15,00 €</div>
<div class="t r p" style="left:1125.3px;top:503px;width:120px">0,00</div>
<div class="t r" style="left:1214.9px;top:503px;width:120px">0,00 €</div>
<div class="t r p" style="left:402.6px;top:523px;width:120px">2,00</div>
<div class="t r" style="left:481.1px;top:523px;width:120px">60,00 €</div>
<div class="t r" style="left:557.8px;top:523px;width:120px">120,00 €</div>
<div class="t r" style="left:700.9px;top:523px;width:120px">120,00 €</div>
<div class="t r p" style="left:750px;top:523px;width:120px">4,00</div>
<div class="t r" style="left:835.8px;top:523px;width:120px">60,00 €</div>
<div class="t r" style="left:912.8px;top:523px;width:120px">240,00 €</div>
<div class="t r" style="left:978.6px;top:523px;width:120px"><span style="margin-right:18.3px">-</span>€</div>
<div class="t r" style="left:1055.8px;top:523px;width:120px">240,00 €</div>
<div class="t r red p" style="left:1125.3px;top:523px;width:120px"><span class="m">-</span>2,00</div>
<div class="t r red" style="left:1214.9px;top:523px;width:120px"><span class="m">-</span>120,00 €</div>
<div class="t r" style="left:557.8px;top:543px;width:120px"><span style="margin-right:18.3px">-</span>€</div>
<div class="t r" style="left:700.9px;top:543px;width:120px"><span style="margin-right:18.3px">-</span>€</div>
<div class="t r p" style="left:750px;top:543px;width:120px">0,00</div>
<div class="t r" style="left:835.8px;top:543px;width:120px"><span style="margin-right:18.3px">-</span>€</div>
<div class="t r" style="left:912.8px;top:543px;width:120px"><span style="margin-right:18.3px">-</span>€</div>
<div class="t r" style="left:978.6px;top:543px;width:120px"><span style="margin-right:18.3px">-</span>€</div>
<div class="t r" style="left:1055.8px;top:543px;width:120px"><span style="margin-right:18.3px">-</span>€</div>
<div class="t r p" style="left:1125.3px;top:543px;width:120px">0,00</div>
<div class="t r" style="left:1214.9px;top:543px;width:120px">0,00 €</div>
<div class="t r" style="left:557.8px;top:563px;width:120px"><span style="margin-right:18.3px">-</span>€</div>
<div class="t r" style="left:700.9px;top:563px;width:120px"><span style="margin-right:18.3px">-</span>€</div>
<div class="t r p" style="left:750px;top:563px;width:120px">0,00</div>
<div class="t r" style="left:835.8px;top:563px;width:120px"><span style="margin-right:18.3px">-</span>€</div>
<div class="t r" style="left:912.8px;top:563px;width:120px"><span style="margin-right:18.3px">-</span>€</div>
<div class="t r" style="left:978.6px;top:563px;width:120px"><span style="margin-right:18.3px">-</span>€</div>
<div class="t r" style="left:1055.8px;top:563px;width:120px"><span style="margin-right:18.3px">-</span>€</div>
<div class="t r p" style="left:1125.3px;top:563px;width:120px">0,00</div>
<div class="t r" style="left:1214.9px;top:563px;width:120px">0,00 €</div>
<div class="t r b p" style="left:402.6px;top:583px;width:120px">20,00</div>
<div class="t r b" style="left:557.8px;top:583px;width:120px">1<span style="margin:0 .5px 0 .8px">.</span>180,00 €</div>
<div class="t r b" style="left:624.4px;top:583px;width:120px">50,00 €</div>
<div class="t r b" style="left:700.9px;top:583px;width:120px">1<span style="margin:0 .5px 0 .8px">.</span>230,00 €</div>
<div class="t r b p" style="left:750px;top:583px;width:120px">22,65</div>
<div class="t r b" style="left:912.8px;top:583px;width:120px">1<span style="margin:0 .5px 0 .8px">.</span>339,00 €</div>
<div class="t r b" style="left:978.6px;top:583px;width:120px">120,00 €</div>
<div class="t r b" style="left:1055.8px;top:583px;width:120px">1<span style="margin:0 .5px 0 .8px">.</span>459,00 €</div>
<div class="t r b red p" style="left:1125.3px;top:583px;width:120px"><span class="m">-</span>2,65</div>
<div class="t r b red" style="left:1214.9px;top:583px;width:120px"><span class="m">-</span>229,00 €</div>
<div class="t r" style="left:557.8px;top:625px;width:120px">1<span style="margin:0 .5px 0 .8px">.</span>180,00 €</div>
<div class="t r" style="left:624.4px;top:625px;width:120px">50,00 €</div>
<div class="t r" style="left:700.9px;top:625px;width:120px">1<span style="margin:0 .5px 0 .8px">.</span>230,00 €</div>
</body></html>
